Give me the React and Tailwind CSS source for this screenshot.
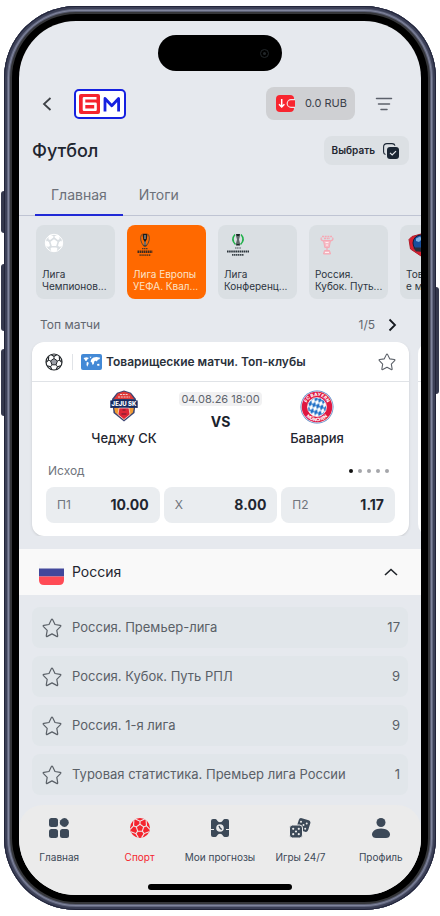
import { useState } from "react";

const leagues = [
  { id: "ucl", lines: ["Лига", "Чемпионов..."], Logo: BallMark },
  { id: "uel", lines: ["Лига Европы", "УЕФА. Квал..."], Logo: EuropaLogo },
  { id: "uecl", lines: ["Лига", "Конференц..."], Logo: ConferenceLogo },
  { id: "cup", lines: ["Россия.", "Кубок. Путь..."], Logo: CupLogo },
  { id: "clubs", lines: ["Товарищески", "е матчи. Т..."], Logo: ShieldLogo },
];

const odds = [
  { label: "П1", value: "10.00" },
  { label: "X", value: "8.00" },
  { label: "П2", value: "1.17" },
];

const tournaments = [
  { name: "Россия. Премьер-лига", count: 17 },
  { name: "Россия. Кубок. Путь РПЛ", count: 9 },
  { name: "Россия. 1-я лига", count: 9 },
  { name: "Туровая статистика. Премьер лига России", count: 1 },
];

const navItems = [
  { label: "Главная", Icon: HomeIcon },
  { label: "Спорт", Icon: SportIcon },
  { label: "Мои прогнозы", Icon: TicketIcon },
  { label: "Игры 24/7", Icon: DiceIcon },
  { label: "Профиль", Icon: ProfileIcon },
];

function BrandLogo() {
  return (
    <svg viewBox="0 0 52 30" className="h-[30px] w-[52px]" fill="none">
      <rect x="1" y="1" width="50" height="28" rx="4" fill="#fff" stroke="#1520e0" strokeWidth="2" />
      <rect x="5" y="5" width="21" height="20" rx="2" fill="#f5242e" />
      <path d="M22.500 9.300H10v11.400h11.500v-6H11" stroke="#fff" strokeWidth="2.600" strokeLinejoin="round" />
      <path d="M31 22.500V9.500l6.800 7.300 6.800-7.300v13" stroke="#1520e0" strokeWidth="2.800" strokeLinejoin="round" />
    </svg>
  );
}

function StarIcon({ className }) {
  return (
    <svg viewBox="0 0 20 20" className={className} fill="none" stroke="currentColor" strokeWidth="1.2" strokeLinejoin="round">
      <path d="M9.3 1.8q.7-1.2 1.4 0l2.3 4.700 5.100.8q1.300.3.4 1.300l-3.700 3.700.9 5.400q.1 1.200-1 .7L10 15.900l-4.700 2.500q-1.100.5-1-.7l.9-5.400L1.500 8.600q-.9-1 .4-1.300L7 6.500z" />
    </svg>
  );
}

function BallMark() {
  return (
    <svg viewBox="0 0 20 20" className="h-5 w-5">
      <g fill="#fff">
        <path d="M10 6.300l3.500 2.500-1.300 4.100H7.800L6.500 8.800z" />
        <path d="M6.300 1.800l3.200 1.500-.2 1.300-3.200 2.300-1.500-.6-.3-3zM13.700 1.800l-3.200 1.500.2 1.300 3.200 2.300 1.500-.6.3-3zM1.500 8.600l1.900-.7 1.500 1 1.100 3.600-1 1.300-2.800-.2zM18.500 8.600l-1.900-.7-1.500 1-1.100 3.600 1 1.300 2.800-.2zM6.600 15.200l1.200-.7h4.400l1.200.7-.4 2.600-3 .9-3-.9z" />
      </g>
      <circle cx="10" cy="10" r="8.700" fill="none" stroke="#fff" strokeWidth="1" />
    </svg>
  );
}

function EuropaLogo() {
  return (
    <svg viewBox="0 0 20 24" className="h-6 w-5">
      <path d="M6.500 1.500Q4 7 8.700 13M13.500 1.500Q16 7 11.300 13" stroke="#5b4a38" strokeWidth="1" fill="none" />
      <path d="M7.500.8h5l-.7 5.700-1 1.500.5 5.500H8.700l.5-5.500-1-1.500z" fill="#1c1d1b" />
      <path d="M10 2v4M10 8.500v4" stroke="#cfd2cf" strokeWidth=".9" />
      <path d="M7 15.700h6" stroke="#4b3a2b" strokeWidth="1.300" strokeDasharray="1.500 .5" />
      <path d="M2.500 18.800h15" stroke="#3c2a1e" strokeWidth="2.500" strokeDasharray="1.600 .5" />
      <path d="M4.500 22.200h11" stroke="#5f3919" strokeWidth="1.700" strokeDasharray="1.300 .6" />
    </svg>
  );
}

function ConferenceLogo() {
  return (
    <svg viewBox="0 0 24 24" className="h-6 w-6">
      <path d="M9 1.500Q4.500 6.500 9.500 11.500M15 1.500Q19.500 6.500 14.500 11.500" stroke="#21b04b" strokeWidth="1.500" fill="none" />
      <path d="M10 1h4l-1 5.500 1 6h-4l1-6z" fill="#1b2426" />
      <path d="M12 3v8" stroke="#c8ced2" strokeWidth=".8" />
      <path d="M9 15h6" stroke="#4b545b" strokeWidth="1.200" strokeDasharray="1.300 .4" />
      <path d="M1 18.500h22" stroke="#2b343b" strokeWidth="1.900" strokeDasharray="1.600 .5" />
      <path d="M6 21.800h12" stroke="#3b444b" strokeWidth="1.700" strokeDasharray="1.500 .5" />
    </svg>
  );
}

function CupLogo() {
  return (
    <svg viewBox="0 0 20 24" className="h-6 w-5" fill="none" stroke="#f5a9b5">
      <path d="M6.500 7.500h7l-1.300 7H7.800zM7.500 17.500h5l1 3.500h-7z" fill="#f6bcc6" />
      <path d="M6.500 8Q3 7 4.500 4.500M13.500 8Q17 7 15.500 4.500M10 14v4" strokeWidth="1.300" />
      <path d="M5 3.500h10M7 5.500h6" strokeWidth="1.500" strokeDasharray="2 .7" />
      <path d="M8.500 9.500h3M9 12h2M8 19.500h4" stroke="#fff" strokeWidth=".8" />
    </svg>
  );
}

function ShieldLogo() {
  return (
    <svg viewBox="0 0 26 24" className="h-6 w-[26px]">
      <path d="M13 1l9 2.500 3 3-1.500 9.500L13 23 2.500 16 1 6.500l3-3z" fill="#d8202f" stroke="#b01c2a" />
      <circle cx="13" cy="10" r="8" fill="#184f9c" stroke="#101f3c" />
      <path d="M8 5.500l4-2 2 2.500-3 3-3-1zM14 9l4-2 1 4-3 3z" fill="#7fb1e4" />
      <path d="M5 14.500h16l-3 4H8z" fill="#2a2d3a" />
    </svg>
  );
}

function SoccerBall() {
  return (
    <svg viewBox="0 0 18 18" className="h-[18px] w-[18px]" fill="none" stroke="#23272b">
      <circle cx="9" cy="9" r="8" strokeWidth="1.200" />
      <path d="M9 5.500l3.400 2.400-1.300 3.900H6.900L5.600 7.900z" fill="#9b9ea6" strokeWidth="1" />
      <path d="M9 5.500V3.300M12.400 7.900l2.200-.7M11.100 11.800l1.400 2M6.900 11.800l-1.400 2M5.600 7.900l-2.200-.7" strokeWidth=".9" />
      <path d="M6.200 1.800L9 3.300l2.800-1.500M14.300 3.700l.3 3.500 2.200 2.100M15.900 12.800l-3.400 1-1.300 2.800M6.800 16.600l-1.300-2.800-3.400-1M1.200 9.300l2.200-2.100.3-3.500" strokeWidth="1.100" />
    </svg>
  );
}

function WorldFlag() {
  return (
    <svg viewBox="0 0 21 16" className="h-4 w-[21px]">
      <rect width="21" height="16" rx="2" fill="#4389d6" />
      <path d="M2.500 4l3-.8 2.500.8-1.500 1.200-.8 1.500-1.200.3-.7-1.200zM5.800 7.800l2 1-.6 2-1 2-.7-2zM8.500 2.700h2l-1 1.500zM10.500 5l2-1.500 3-.5 3.700.8-.8 1.500-1.600.4-.9 1.800-1.300-.7-1.200.5-.6 2.700-1.200 1-.8-2.500-1.300-.9zM16 10l2.200-.2.4 1.800-2 .3z" fill="#fff" />
    </svg>
  );
}

function JejuCrest() {
  return (
    <svg viewBox="0 0 28 32" className="h-8 w-7">
      <path d="M14 .5l7 2.300L26 9l-1.500 14L14 31.500 3.500 23 2 9l5-6.200z" fill="#3a4372" />
      <path d="M14 1.600l6.200 2L24 9H4l3.800-5.400z" fill="#e13a38" />
      <path d="M10 4.500h8M8 7h12" stroke="#f1cbd0" strokeWidth="1.200" strokeDasharray="2 .8" />
      <path d="M4.200 18h19.600l-.9 4.500L14 29.800 5.100 22.500z" fill="#f29a32" />
      <path d="M9 18h10l1 6.500-6 5-6-5z" fill="#df2637" stroke="#fff" strokeWidth=".6" />
      <path d="M.3 10.500q13.700-2 27.400 0v7.500q-13.700-1.500-27.400 0z" fill="#182b60" />
      <text x="14" y="16" textAnchor="middle" fontSize="6" fontWeight="800" fill="#fff" fontFamily="Inter, sans-serif">JEJU SK</text>
      <path d="M11.500 24h5M12.500 20h3" stroke="#921e33" strokeWidth="1.300" />
    </svg>
  );
}

function BayernCrest() {
  return (
    <svg viewBox="0 0 34 34" className="h-[34px] w-[34px]">
      <defs>
        <pattern id="lozenge" width="4" height="6.500" patternUnits="userSpaceOnUse" patternTransform="rotate(18)">
          <rect width="4" height="6.500" fill="#fff" />
          <path d="M2 0l2 3.250-2 3.250L0 3.250z" fill="#1f6fc6" />
        </pattern>
        <path id="arcTop" d="M6 17a11 11 0 0 1 22 0" />
        <path id="arcBottom" d="M2.800 17a14.200 14.200 0 0 0 28.400 0" />
      </defs>
      <circle cx="17" cy="17" r="16.500" fill="#4d86c6" />
      <circle cx="17" cy="17" r="15.800" fill="#f6dfe6" />
      <circle cx="17" cy="17" r="15.200" fill="#df1740" />
      <circle cx="17" cy="17" r="9.500" fill="url(#lozenge)" stroke="#fff" strokeWidth=".7" />
      <g fill="#fff" fontSize="4.500" fontWeight="800" fontFamily="Inter, sans-serif" textAnchor="middle">
        <text><textPath href="#arcTop" startOffset="50%">FC BAYERN</textPath></text>
        <text><textPath href="#arcBottom" startOffset="50%">MÜNCHEN</textPath></text>
      </g>
    </svg>
  );
}

function HomeIcon() {
  return (
    <svg viewBox="0 0 20 20" className="h-5 w-5" fill="currentColor">
      <rect x="0" y="0" width="9" height="9" rx="2.500" />
      <path d="M13.600.5q1.900-.9 3.800 0l1.600 1.700q1.500 2.300 0 4.600l-1.600 1.700q-1.900.9-3.800 0L11.500 6.800q-1.500-2.300 0-4.600z" />
      <rect x="0" y="11" width="9" height="9" rx="2.500" />
      <rect x="11" y="11" width="9" height="9" rx="2.500" />
    </svg>
  );
}

function SportIcon() {
  return (
    <svg viewBox="0 0 20 20" className="h-5 w-5">
      <circle cx="10" cy="10" r="10" fill="currentColor" />
      <g fill="none" stroke="#ebebeb" strokeWidth="1.100">
        <path d="M10 6.200l3.700 2.700-1.400 4.300H7.700L6.300 8.900zM10 6.200V3.200M13.700 8.900l2.800-1.100M12.300 13.200l1.800 2.400M7.700 13.200l-1.800 2.400M6.300 8.900L3.500 7.800" />
        <path d="M5.300 1L10 3.200 14.700 1M16.100 2.200l.4 5.600 3.300 3.600M19.100 13.800l-5 1.800-2.500 4M8.400 19.600l-2.500-4-5-1.800M.2 11.400l3.300-3.600.4-5.600" />
      </g>
    </svg>
  );
}

function TicketIcon() {
  return (
    <svg viewBox="0 0 20 20" className="h-5 w-5">
      <path d="M3 1h2.300q1 0 1.500.9Q8 4.300 10 4.300t3.200-2.400q.5-.9 1.500-.9H17q2 0 2 2v14q0 2-2 2h-2.300q-1 0-1.500-.9-1.200-2.400-3.200-2.400t-3.200 2.400q-.5.900-1.500.9H3q-2 0-2-2V3q0-2 2-2z" fill="currentColor" />
      <circle cx="10" cy="10" r="3.800" fill="#ebebeb" />
      <path d="M1 11.500h3M16 11.500h3" stroke="#ebebeb" strokeWidth="1.200" />
      <path d="M9 8l1.200 2.200 1.600 1.300" stroke="currentColor" strokeWidth="1.400" fill="none" />
    </svg>
  );
}

function DiceIcon() {
  return (
    <svg viewBox="0 0 22 20" className="h-5 w-[22px]">
      <rect x="8.500" y="1" width="12" height="12" rx="2.500" transform="rotate(17 14.500 7)" fill="currentColor" />
      <g fill="#ebebeb">
        <circle cx="12" cy="3.800" r="1" />
        <circle cx="17.700" cy="5.500" r="1" />
        <circle cx="14.500" cy="7" r="1" />
        <circle cx="16.200" cy="10.800" r="1" />
      </g>
      <rect x=".5" y="7" width="13" height="13" rx="3" fill="currentColor" stroke="#ebebeb" />
      <g fill="#ebebeb">
        <circle cx="4.200" cy="10.800" r="1.100" />
        <circle cx="9.800" cy="10.800" r="1.100" />
        <circle cx="7" cy="13.500" r="1.100" />
        <circle cx="4.200" cy="16.200" r="1.100" />
        <circle cx="9.800" cy="16.200" r="1.100" />
      </g>
    </svg>
  );
}

function ProfileIcon() {
  return (
    <svg viewBox="0 0 20 20" className="h-5 w-5" fill="currentColor">
      <circle cx="10" cy="4.500" r="4.500" />
      <path d="M10 10.500c5.500 0 9 2.800 9 6 0 2.400-2 3.500-4 3.500H5c-2 0-4-1.100-4-3.500 0-3.200 3.500-6 9-6z" />
    </svg>
  );
}

function TopBar() {
  return (
    <header className="mt-4 flex h-[33px] items-center pr-7 pl-5">
      <button type="button" aria-label="Назад" className="flex h-8 w-[35px] items-center">
        <svg viewBox="0 0 16 16" className="h-4 w-4" fill="none" stroke="#3f4247" strokeWidth="1.800">
          <path d="M11.500 2L5 8l6.500 6" />
        </svg>
      </button>
      <a href="#home" aria-label="На главную">
        <BrandLogo />
      </a>
      <button
        type="button"
        className="ml-auto flex h-[33px] items-center gap-[10px] rounded-lg bg-[#cfd0d3] pr-2 pl-[10px] text-[11px] text-[#3a3f49]"
      >
        <svg viewBox="0 0 19 17" className="h-[17px] w-[19px]" fill="none">
          <path d="M4 0h10q4 0 4 3.500V17H4q-4 0-4-4V4Q0 0 4 0z" fill="#f8252f" />
          <path d="M19 4.700h-4a3.800 3.800 0 0 0 0 7.600h4" stroke="#f3dfe2" strokeWidth="1.200" fill="#f8252f" />
          <path d="M18 12.900q0 4.100-4 4.100h5v-4.100z" fill="#cfd0d3" />
          <path d="M5.700 4v8M3 9.300l2.700 2.700 2.700-2.700" stroke="#fff" strokeWidth="1.500" />
        </svg>
        0.0 RUB
      </button>
      <button type="button" aria-label="Меню" className="ml-5 flex h-8 w-[18px] items-center justify-center">
        <svg viewBox="0 0 18 14" className="h-[14px] w-[18px]" stroke="#5c616b" strokeWidth="1.500" strokeLinecap="round">
          <path d="M1.500 1.500h15M3.500 7h11M6 12.500h6" />
        </svg>
      </button>
    </header>
  );
}

function MatchCard() {
  return (
    <article className="w-[377px] shrink-0 rounded-xl bg-white shadow-sm">
      <div className="flex h-10 items-center border-b border-[#e0e3e7] pr-[13px] pl-[13px]">
        <SoccerBall />
        <span className="ml-[9px] h-4 w-px bg-[#e0e3e7]" />
        <span className="ml-2">
          <WorldFlag />
        </span>
        <h3 className="ml-1 text-xs font-semibold text-[#2a313b]">Товарищеские матчи. Топ-клубы</h3>
        <button type="button" aria-label="В избранное" className="ml-auto text-[#5b6068]">
          <StarIcon className="h-[18px] w-[18px]" />
        </button>
      </div>

      <div className="flex justify-center pt-2">
        <div className="flex w-[110px] flex-col items-center">
          <div className="flex h-[34px] items-start">
            <JejuCrest />
          </div>
          <p className="mt-1 text-[13px] leading-5 font-medium text-[#1f2630]">Чеджу СК</p>
        </div>
        <div className="flex w-[83px] flex-col items-center pt-[2px]">
          <time className="w-full rounded-sm bg-[#f1f1f2] text-center text-[11px] leading-[14px] whitespace-nowrap text-[#5e646d]">
            04.08.26 18:00
          </time>
          <p className="mt-[6px] text-sm leading-5 font-bold text-[#1a222c]">VS</p>
        </div>
        <div className="flex w-[110px] flex-col items-center">
          <BayernCrest />
          <p className="mt-1 text-[13px] leading-5 font-medium text-[#1f2630]">Бавария</p>
        </div>
      </div>

      <div className="mt-[15px] flex items-center justify-between pr-5 pl-4 text-xs text-[#70757d]">
        <span>Исход</span>
        <div className="flex gap-[5px]">
          {[0, 1, 2, 3, 4].map((dot) => (
            <span key={dot} className={`h-1 w-1 rounded-full ${dot === 0 ? "bg-[#111]" : "bg-[#a5a6aa]"}`} />
          ))}
        </div>
      </div>

      <div className="mx-[14px] mt-2 grid grid-cols-3 gap-1 pb-[13px]">
        {odds.map((o) => (
          <button
            key={o.label}
            type="button"
            className="flex h-9 items-center justify-between rounded-lg bg-[#eaedf0] px-[11px]"
          >
            <span className="text-xs text-[#70757d]">{o.label}</span>
            <span className="text-sm font-bold text-[#1f2630]">{o.value}</span>
          </button>
        ))}
      </div>
    </article>
  );
}

function BottomNav({ active, onChange }) {
  return (
    <nav className="mt-[10px] rounded-t-3xl bg-[#ebebeb] pt-[13px] pb-[5px]">
      <div className="grid grid-cols-5">
        {navItems.map(({ label, Icon }) => (
          <button
            key={label}
            type="button"
            onClick={() => onChange(label)}
            className={`flex flex-col items-center gap-[11px] text-[10px] leading-4 whitespace-nowrap ${
              active === label ? "text-[#f5242e]" : "text-[#3c4958]"
            }`}
          >
            <Icon />
            {label}
          </button>
        ))}
      </div>
      <div className="mx-auto mt-[19px] h-[6px] w-[144px] rounded-full bg-black" />
    </nav>
  );
}

export default function App() {
  const [tab, setTab] = useState("Главная");
  const [league, setLeague] = useState("uel");
  const [open, setOpen] = useState(true);
  const [page, setPage] = useState("Спорт");

  return (
    <div className="bg-white px-1 py-[6px] font-['Inter','Noto_Sans',sans-serif]">
      <div className="relative rounded-[72px] bg-[#35363a] p-2 shadow-[inset_0_0_0_1px_#22253a,inset_0_0_0_3px_#3c4057,inset_0_0_0_4px_#62677f,inset_0_0_0_5px_#80859d,inset_0_0_0_6px_#5a5e72]">
        {/* side buttons */}
        <span className="absolute top-[185px] -left-[3px] h-[42px] w-[3px] rounded-l-sm bg-[#34384d]" />
        <span className="absolute top-[258px] -left-[3px] h-[67px] w-[3px] rounded-l-sm bg-[#34384d]" />
        <span className="absolute top-[343px] -left-[3px] h-[67px] w-[3px] rounded-l-sm bg-[#34384d]" />
        <span className="absolute top-[281px] -right-[3px] h-[107px] w-[3px] rounded-r-sm bg-[#34384d]" />

        <div className="rounded-[64px] bg-black p-[7px]">
          <main className="overflow-hidden rounded-[57px] bg-[#e6e9ee] pt-[14px]">
            <div className="mx-auto flex h-9 w-[124px] items-center justify-end rounded-full bg-black pr-[13px]">
              <span className="flex h-[9px] w-[9px] items-center justify-center rounded-full border border-[#22272a]">
                <span className="h-[3px] w-[3px] rounded-full bg-[#22272a]" />
              </span>
            </div>

            <TopBar />

            <div className="mt-4 flex items-center justify-between pr-3 pl-[13px]">
              <h1 className="text-lg font-medium text-[#1f2630]">Футбол</h1>
              <button
                type="button"
                className="flex h-[29px] items-center gap-2 rounded-lg bg-[#dce0e4] pr-[10px] pl-2 text-[10px] font-semibold text-[#1f2630]"
              >
                Выбрать
                <svg viewBox="0 0 16 16" className="h-4 w-4" fill="none">
                  <path d="M2.500 11.500Q.6 11 .6 9V4Q.6.6 4 .6h5q2.500 0 3 2" stroke="#1a2533" strokeWidth="1.100" />
                  <rect x="4" y="4" width="12" height="12" rx="3" fill="#1a2533" />
                  <path d="M7 9.800l2.200 2.200 3.800-3.800" stroke="#e6e9ee" strokeWidth="1.200" />
                </svg>
              </button>
            </div>

            <div className="mt-[10px] flex border-b border-[#bfc4d3] pl-4">
              {["Главная", "Итоги"].map((name) => (
                <button
                  key={name}
                  type="button"
                  onClick={() => setTab(name)}
                  className={`-mb-px h-[41px] border-b-2 px-4 text-sm text-[#6c7079] ${
                    tab === name ? "border-[#2029d6]" : "border-transparent"
                  }`}
                >
                  {name}
                </button>
              ))}
            </div>

            <div className="mt-[9px] flex gap-3 overflow-hidden pl-[17px]">
              {leagues.map(({ id, lines, Logo }) => (
                <button
                  key={id}
                  type="button"
                  onClick={() => setLeague(id)}
                  className={`flex h-[74px] w-[79px] shrink-0 flex-col justify-between rounded-lg px-[6px] pt-2 pb-[7px] text-left text-[10px] leading-3 whitespace-nowrap ${
                    league === id ? "bg-[#ff6900] text-[#fbe3c8]" : "bg-[#dadfe3] text-[#2c343e]"
                  }`}
                >
                  <span className="ml-[2px]">
                    <Logo />
                  </span>
                  <span>
                    {lines[0]}
                    <br />
                    {lines[1]}
                  </span>
                </button>
              ))}
            </div>

            <div className="mt-4 flex h-5 items-center pr-6 pl-[21px] text-xs text-[#62676f]">
              <h2>Топ матчи</h2>
              <span className="ml-auto">1/5</span>
              <button type="button" aria-label="Следующий матч" className="ml-3">
                <svg viewBox="0 0 10 14" className="h-[14px] w-[10px]" fill="none" stroke="#15191f" strokeWidth="1.800">
                  <path d="M2.500 1.500L8 7l-5.500 5.500" />
                </svg>
              </button>
            </div>

            <div className="mt-[7px] flex gap-[9px] overflow-hidden pl-[13px]">
              <MatchCard />
              <div className="w-[377px] shrink-0 rounded-xl bg-white">
                <div className="h-10 border-b border-[#e0e3e7]" />
              </div>
            </div>

            <button
              type="button"
              onClick={() => setOpen(!open)}
              className="mt-[13px] flex h-[46px] w-full items-center bg-[#f9f9f9] pr-[23px] pl-5"
            >
              <svg viewBox="0 0 25 25" className="h-[25px] w-[25px]">
                <rect width="25" height="25" rx="5" fill="#f5f5f6" />
                <path d="M0 8.500h25v8H0z" fill="#41479b" />
                <path d="M0 16.500h25V20q0 5-5 5H5q-5 0-5-5z" fill="#ff4b55" />
              </svg>
              <span className="ml-2 text-sm text-[#1f2630]">Россия</span>
              <svg viewBox="0 0 14 8" className="ml-auto h-2 w-[14px]" fill="none" stroke="#1f2329" strokeWidth="1.600">
                <path d="M1 7l6-5.500L13 7" />
              </svg>
            </button>

            {open && (
              <ul className="mx-[13px] mt-3 flex flex-col gap-2">
                {tournaments.map((t) => (
                  <li key={t.name} className="flex h-[41px] items-center rounded-lg bg-[#e1e6ea] pr-2 pl-[10px] text-[13px] text-[#5a6067]">
                    <button type="button" aria-label={`В избранное: ${t.name}`}>
                      <StarIcon className="h-5 w-5" />
                    </button>
                    <a href="#league" className="ml-[10px] flex-1">
                      {t.name}
                    </a>
                    <span>{t.count}</span>
                  </li>
                ))}
              </ul>
            )}

            <BottomNav active={page} onChange={setPage} />
          </main>
        </div>
      </div>
    </div>
  );
}
